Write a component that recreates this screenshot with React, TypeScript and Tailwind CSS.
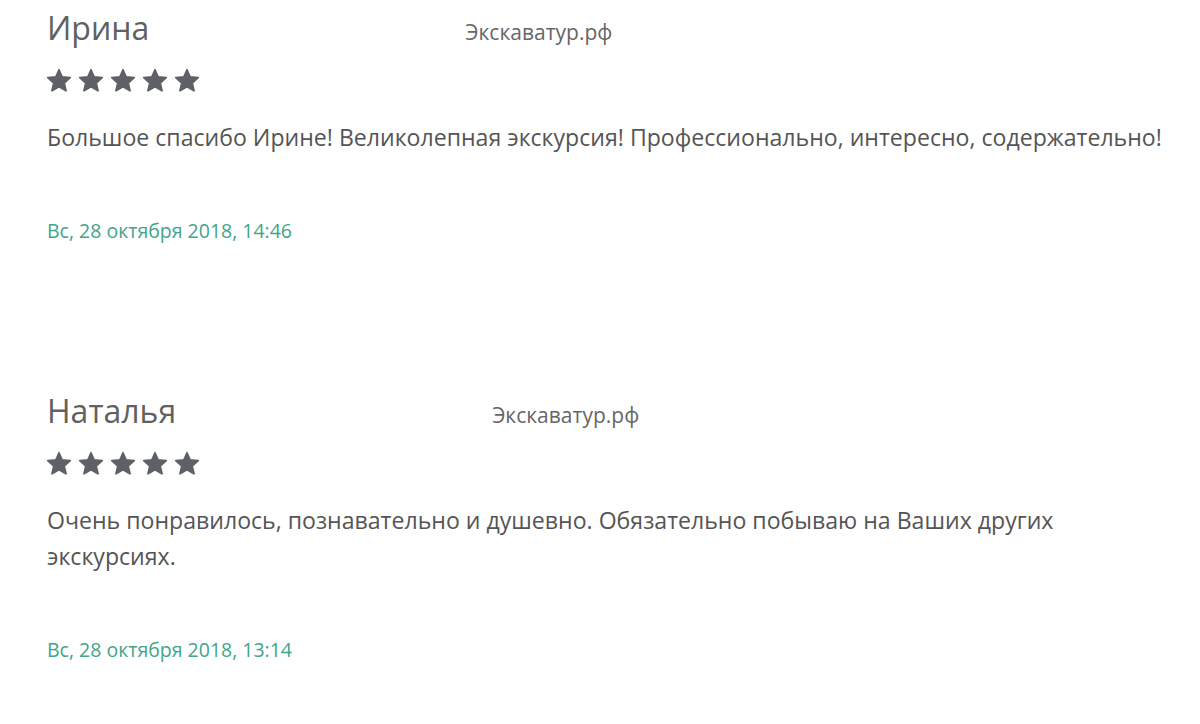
const reviews = [
  {
    name: 'Ирина',
    text: 'Большое спасибо Ирине! Великолепная экскурсия! Профессионально, интересно, содержательно!',
    date: 'Вс, 28 октября 2018, 14:46',
  },
  {
    name: 'Наталья',
    text: 'Очень понравилось, познавательно и душевно. Обязательно побываю на Ваших других экскурсиях.',
    date: 'Вс, 28 октября 2018, 13:14',
  },
];

function Star() {
  return (
    <svg width="26" height="26" viewBox="0 0 26 26" className="text-[#5e6266]">
      <polygon
        points="13,1.8 16.2,9 24.2,9.7 18.2,15 20,22.8 13,18.8 6,22.8 7.8,15 1.8,9.7 9.8,9"
        fill="currentColor"
        stroke="currentColor"
        strokeWidth="1.8"
        strokeLinejoin="round"
      />
    </svg>
  );
}

export default function App() {
  return (
    <div className="min-h-screen bg-white font-['Open_Sans',sans-serif]">
      <div className="w-[1172px] pl-[47px] pt-[8px]">
        {reviews.map((r, i) => (
          <div key={i} className={i > 0 ? 'mt-[148px]' : ''}>
            <div className="flex items-baseline gap-[316px]">
              <h3 className="text-[32px] leading-[40px] text-[#616161]">{r.name}</h3>
              <span className="text-[21px] leading-[40px] text-[#666]">Экскаватур.рф</span>
            </div>
            <div className="mt-[16px] flex gap-[6px] -ml-[1px]">
              {[0, 1, 2, 3, 4].map((s) => (
                <Star key={s} />
              ))}
            </div>
            <p className="mt-[25px] text-[23.1px] leading-[36px] text-[#555]">{r.text}</p>
            <p className="mt-[64px] text-[19.5px] leading-[24px] text-[#41a58b]">{r.date}</p>
          </div>
        ))}
      </div>
    </div>
  );
}
